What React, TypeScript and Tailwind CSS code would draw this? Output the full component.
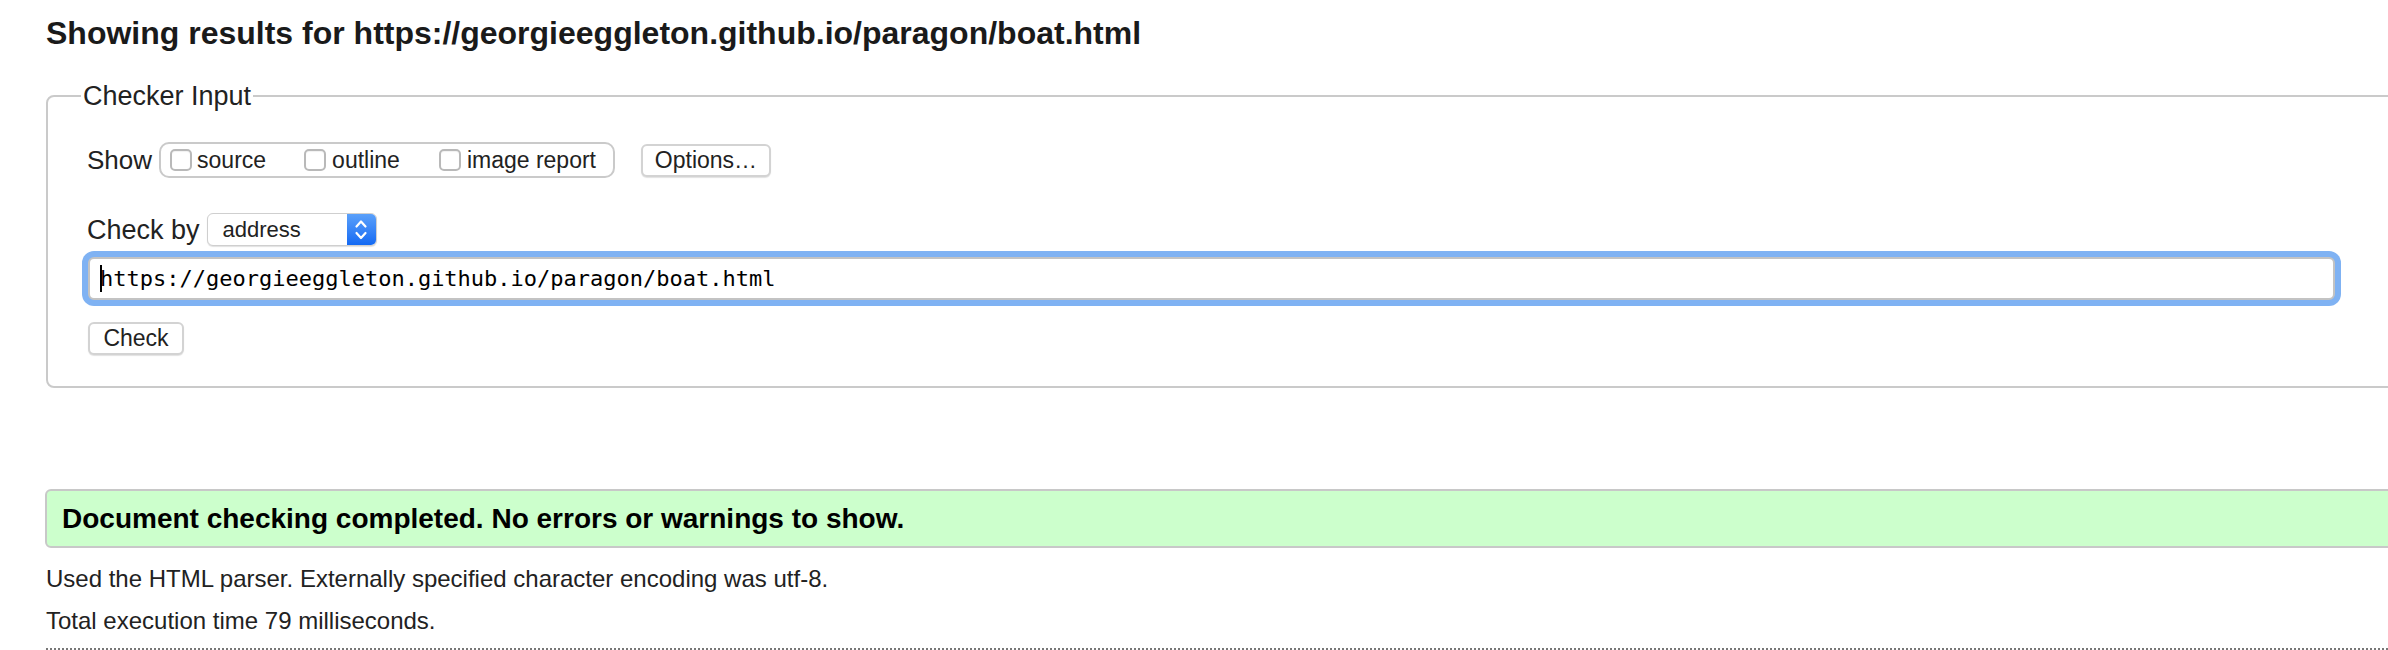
function CheckBox() {
  return (
    <span className="inline-block w-[22px] h-[22px] rounded-[5px] border-2 border-[#b9b9b9] bg-white shadow-[inset_0_1px_1px_rgba(0,0,0,0.06)]" />
  );
}

function Btn({ label, className }: { label: string; className?: string }) {
  return (
    <span
      className={
        "inline-flex items-center justify-center h-[33px] rounded-[6px] border-2 border-[#d3d3d3] bg-white text-[23px] leading-none text-[#222] shadow-[0_1px_1px_rgba(0,0,0,0.12)] " +
        (className ?? "")
      }
    >
      {label}
    </span>
  );
}

export default function App() {
  return (
    <div className="w-full h-[650px] overflow-hidden bg-white text-[#222] font-['Liberation_Sans',Arial,sans-serif]">
      <div className="w-[2500px] pl-[46px]">
        <h2 className="pt-[15px] text-[32px] leading-[36px] font-bold text-[#1a1a1a]">
          Showing results for https://georgieeggleton.github.io/paragon/boat.html
        </h2>

        <fieldset className="mt-[30px] w-[2420px] border-2 border-[#cacaca] rounded-lg pl-[39px] pb-[31px]">
          <legend className="-ml-[6px] px-[2px] text-[27px] leading-[30px]">Checker Input</legend>

          <div className="mt-[31px] flex items-center h-[36px]">
            <span className="text-[26px] leading-[30px]">Show</span>
            <div className="ml-[7px] flex items-center h-[36px] rounded-[10px] border-2 border-[#cacaca] pl-[9px] pr-[17px] text-[23px]">
              <CheckBox />
              <span className="ml-[5px]">source</span>
              <span className="ml-[38px] flex items-center">
                <CheckBox />
              </span>
              <span className="ml-[6px]">outline</span>
              <span className="ml-[39px] flex items-center">
                <CheckBox />
              </span>
              <span className="ml-[6px]">image report</span>
            </div>
            <Btn label="Options…" className="ml-[26px] w-[130px]" />
          </div>

          <div className="mt-[35px] flex items-center h-[33px]">
            <span className="text-[27px] leading-[30px]">Check by</span>
            <div className="ml-[7px] flex h-[33px] w-[170px] rounded-[6px] border border-[#cfcfcf] bg-white shadow-[0_1px_1px_rgba(0,0,0,0.12)] overflow-hidden">
              <span className="flex-1 pl-[15px] text-[22px] leading-[31px] text-[#222]">address</span>
              <span className="w-[29px] h-full bg-gradient-to-b from-[#5aa0fa] to-[#1269f3] flex items-center justify-center">
                <svg width="28" height="33" viewBox="0 0 28 33" fill="none" stroke="white" strokeWidth="2.2" strokeLinecap="round" strokeLinejoin="round">
                  <path d="M9.5 13.5 L14 8.5 L18.5 13.5" />
                  <path d="M9.5 20 L14 25 L18.5 20" />
                </svg>
              </span>
            </div>
          </div>

          <div className="mt-[11px] ml-[1px] w-[2247px] h-[43px] rounded-[6px] border-2 border-[#c3c3c3] bg-white ring-[6px] ring-[#7fb2f3] flex items-center pl-[10px] font-['DejaVu_Sans_Mono',monospace] text-[22px] text-black">
            <span className="inline-block w-[2px] h-[27px] bg-black -mr-[2px]" />
            <span>https://georgieeggleton.github.io/paragon/boat.html</span>
          </div>

          <div className="mt-[22px] ml-[1px] flex">
            <Btn label="Check" className="w-[96px] h-[32px]" />
          </div>
        </fieldset>

        <div className="mt-[101px] w-[2420px] h-[59px] rounded-[6px] border-2 border-[#c8c8c8] bg-[#ccffcc] pl-[15px] pt-[12px] -ml-[1px]">
          <p className="text-[28px] leading-[32px] font-bold text-black">
            Document checking completed. No errors or warnings to show.
          </p>
        </div>

        <div className="mt-[10px] text-[24px] leading-[42px] text-[#222]">
          <p>Used the HTML parser. Externally specified character encoding was utf-8.</p>
          <p>Total execution time 79 milliseconds.</p>
        </div>
        <div className="mt-[6px] border-t-2 border-dotted border-[#777]" />
      </div>
    </div>
  );
}
